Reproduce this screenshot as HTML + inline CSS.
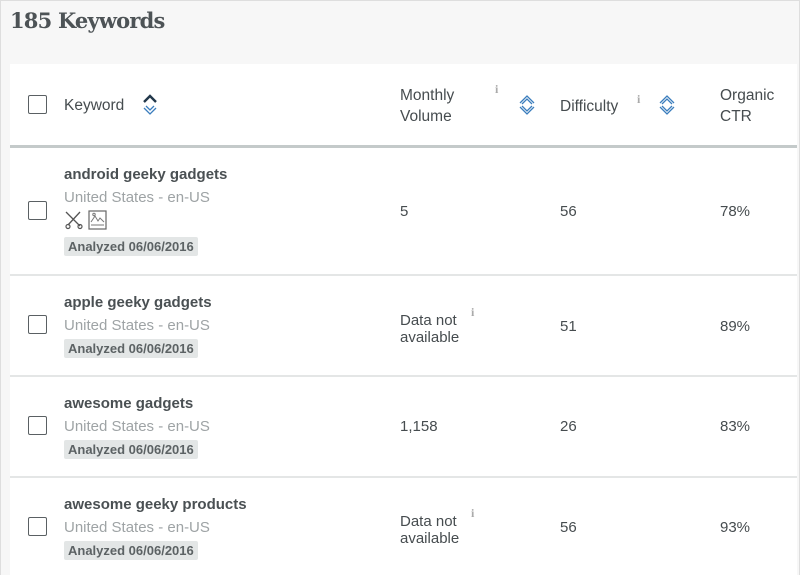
<!DOCTYPE html>
<html><head><meta charset="utf-8"><style>
*{margin:0;padding:0;box-sizing:border-box}
html,body{width:800px;height:575px;overflow:hidden}
body{background:#f7f7f7;font-family:"Liberation Sans",sans-serif;color:#464c4f;position:relative}
.frame{position:absolute;left:0;top:0;width:800px;height:575px;border:1px solid #dedede;border-bottom:none}
.a{position:absolute;white-space:nowrap}
h1{position:absolute;left:10px;top:8px;font-family:"DejaVu Serif","Liberation Serif",serif;font-weight:bold;font-size:21px;color:#4d5356;letter-spacing:-0.8px}
.tbl{position:absolute;left:10px;top:64px;width:787px;height:520px;background:#fff}
.cb{position:absolute;width:19px;height:19px;border:1.6px solid #5a6063;border-radius:2px;background:#fff}
.hd{font-size:15.5px;color:#464c4f;line-height:21px}
.t{font-size:15px;font-weight:bold;color:#4a5053}
.s{font-size:15px;color:#9ea3a5}
.b{font-size:13px;font-weight:bold;color:#5c6264;background:#e3e6e6;padding:2px 4px;border-radius:2px}
.v{font-size:15px;color:#464c4f;line-height:17px}
.line{position:absolute;left:10px;width:787px;height:2px;background:#e4e6e6}
.i{font-family:"Liberation Serif",serif;font-size:12px;font-weight:bold;color:#aaa}
</style></head><body>
<div class="frame"></div>
<h1>185 Keywords</h1>
<div class="tbl"></div>
<div class="cb" style="left:28px;top:95px"></div>
<div class="a hd" style="left:64px;top:95px">Keyword</div>
<svg class="a" style="left:142px;top:94px" width="16" height="22" viewBox="0 0 16 22"><path d="M2 8 L8 2 L14 8" fill="none" stroke="#22384a" stroke-width="2.4"/><path d="M2 14 L8 20 L14 14 M4 12 L8 16 L12 12" fill="none" stroke="#3a7dbd" stroke-width="1.3"/></svg>
<div class="a hd" style="left:400px;top:85px">Monthly<br>Volume</div>
<div class="a i" style="left:495px;top:82px">i</div>
<svg class="a" style="left:518px;top:94px" width="18" height="22" viewBox="0 0 18 22"><path d="M2 9 L9 2 L16 9 M4 10 L9 5 L14 10 M2 13 L9 20 L16 13 M4 12 L9 17 L14 12" fill="none" stroke="#3a7dbd" stroke-width="1.3"/></svg>
<div class="a hd" style="left:560px;top:96px">Difficulty</div>
<div class="a i" style="left:637px;top:92px">i</div>
<svg class="a" style="left:658px;top:94px" width="18" height="22" viewBox="0 0 18 22"><path d="M2 9 L9 2 L16 9 M4 10 L9 5 L14 10 M2 13 L9 20 L16 13 M4 12 L9 17 L14 12" fill="none" stroke="#3a7dbd" stroke-width="1.3"/></svg>
<div class="a hd" style="left:720px;top:85px">Organic<br>CTR</div>
<div class="a" style="left:10px;top:145px;width:787px;height:3px;background:#c4caca"></div>

<div class="cb" style="left:28px;top:201px"></div>
<div class="a t" style="left:64px;top:166px">android geeky gadgets</div>
<div class="a s" style="left:64px;top:189px">United States - en-US</div>
<svg class="a" style="left:64px;top:210px" width="20" height="20" viewBox="0 0 20 20"><path d="M2 2 L16 16 M16 2 L4 15" stroke="#555" stroke-width="1.3" fill="none"/><circle cx="4" cy="16.5" r="2" fill="none" stroke="#555" stroke-width="1.2"/><circle cx="16" cy="16.5" r="2" fill="none" stroke="#555" stroke-width="1.2"/></svg>
<svg class="a" style="left:88px;top:210px" width="20" height="20" viewBox="0 0 20 20"><rect x="1" y="1" width="17" height="18" fill="none" stroke="#666" stroke-width="1.2"/><path d="M3 12 L7 6 L10 11 L12 8 L16 12 M3 15 H16" fill="none" stroke="#777" stroke-width="1"/><circle cx="6" cy="4.5" r="1.2" fill="none" stroke="#777"/></svg>
<div class="a b" style="left:64px;top:237px">Analyzed 06/06/2016</div>
<div class="a v" style="left:400px;top:203px">5</div>
<div class="a v" style="left:560px;top:203px">56</div>
<div class="a v" style="left:720px;top:203px">78%</div>
<div class="line" style="top:274px"></div>

<div class="cb" style="left:28px;top:315px"></div>
<div class="a t" style="left:64px;top:294px">apple geeky gadgets</div>
<div class="a s" style="left:64px;top:317px">United States - en-US</div>
<div class="a b" style="left:64px;top:339px">Analyzed 06/06/2016</div>
<div class="a v" style="left:400px;top:312px">Data not<br>available</div>
<div class="a i" style="left:471px;top:305px">i</div>
<div class="a v" style="left:560px;top:318px">51</div>
<div class="a v" style="left:720px;top:318px">89%</div>
<div class="line" style="top:375px"></div>

<div class="cb" style="left:28px;top:416px"></div>
<div class="a t" style="left:64px;top:395px">awesome gadgets</div>
<div class="a s" style="left:64px;top:418px">United States - en-US</div>
<div class="a b" style="left:64px;top:440px">Analyzed 06/06/2016</div>
<div class="a v" style="left:400px;top:418px">1,158</div>
<div class="a v" style="left:560px;top:418px">26</div>
<div class="a v" style="left:720px;top:418px">83%</div>
<div class="line" style="top:476px"></div>

<div class="cb" style="left:28px;top:517px"></div>
<div class="a t" style="left:64px;top:496px">awesome geeky products</div>
<div class="a s" style="left:64px;top:519px">United States - en-US</div>
<div class="a b" style="left:64px;top:541px">Analyzed 06/06/2016</div>
<div class="a v" style="left:400px;top:513px">Data not<br>available</div>
<div class="a i" style="left:471px;top:506px">i</div>
<div class="a v" style="left:560px;top:519px">56</div>
<div class="a v" style="left:720px;top:519px">93%</div>
</body></html>
